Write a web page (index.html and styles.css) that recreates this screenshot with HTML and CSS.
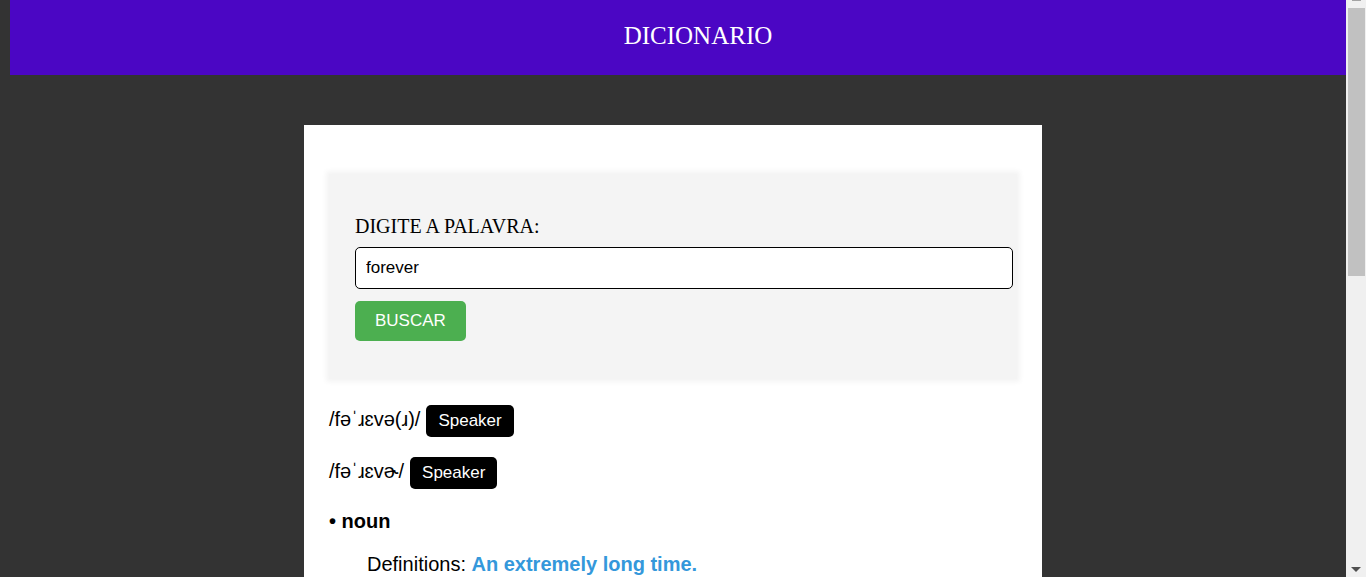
FILE: index.html
```html
<!DOCTYPE html>
<html lang="pt-BR">
<head>
<meta charset="utf-8">
<title>Dicionario</title>
<link rel="stylesheet" href="styles.css">
</head>
<body>
<div class="viewport">
  <div class="page">
    <header class="header"><h1 class="title">DICIONARIO</h1></header>
    <main class="card">
      <form class="search">
        <label class="label" for="word">DIGITE A PALAVRA:</label>
        <input class="field" id="word" type="text" value="forever">
        <button class="submit" type="button">BUSCAR</button>
      </form>
      <section class="result">
        <div class="phonetic"><span class="ipa">/fəˈɹɛvə(ɹ)/</span><button class="speaker" type="button">Speaker</button></div>
        <div class="phonetic"><span class="ipa">/fəˈɹɛvɚ/</span><button class="speaker" type="button">Speaker</button></div>
        <h2 class="class-name">• noun</h2>
        <p class="definition">Definitions: <strong class="meaning">An extremely long time.</strong></p>
      </section>
    </main>
  </div>
  <div class="scrollbar" aria-hidden="true">
    <span class="arrow-up"></span>
    <span class="track"><span class="thumb"></span></span>
    <svg class="arrow-down" width="10" height="5" viewBox="0 0 10 5"><path d="M0 0h10L5 5z" fill="#505050"/></svg>
  </div>
</div>
</body>
</html>
```
FILE: styles.css
```css
body {
  margin: 0;
  background: #333;
  color: #000;
  font: 20px/24px "Liberation Sans", Arial, sans-serif;
}
.viewport {
  display: flex;
  height: 100vh;
  overflow: hidden;
}
.page {
  flex: 1;
  min-width: 0;
  overflow: hidden;
}
.header {
  margin-left: 10px;
  padding: 20px 0 24px 40px;
  background: #4b06c4;
  color: #fff;
  text-align: center;
}
.title {
  margin: 0;
  font: 25px/31px "Liberation Serif", "Times New Roman", serif;
}
.card {
  box-sizing: border-box;
  width: 100%;
  max-width: 738px;
  margin: 50px auto 0;
  padding: 49px 25px 25px;
  background: #fff;
}
.search {
  padding: 40px 26px 38px;
  background: #f4f4f4;
  box-shadow: 0 0 5px 3px #f4f4f4;
}
.label {
  display: block;
  margin-bottom: 9px;
  font: 20px/24px "Liberation Serif", "Times New Roman", serif;
}
.field {
  display: block;
  width: 100%;
  height: 40px;
  padding: 0 10px;
  border: 1px solid #000;
  border-radius: 5px;
  background: #fff;
  color: #000;
  font: 17px "Liberation Sans", Arial, sans-serif;
}
.submit {
  display: block;
  height: 40px;
  margin-top: 12px;
  padding: 0 20px;
  border: 0;
  border-radius: 5px;
  background: #4caf50;
  color: #fff;
  font: 17px "Liberation Sans", Arial, sans-serif;
}
.result {
  padding-top: 26px;
}
.phonetic {
  display: flex;
  align-items: center;
  gap: 6px;
  margin-bottom: 20px;
}
.ipa {
  padding-bottom: 4px;
}
.speaker {
  height: 32px;
  padding: 0 12px;
  border: 0;
  border-radius: 5px;
  background: #000;
  color: #fff;
  font: 17px "Liberation Sans", Arial, sans-serif;
}
.class-name {
  margin: 0;
  font-size: 20px;
  line-height: 24px;
}
.definition {
  margin: 19px 0 0 38px;
}
.meaning {
  color: #3498db;
}
.scrollbar {
  display: flex;
  flex-direction: column;
  align-items: center;
  width: 20px;
  background: #f0f0f0;
}
.arrow-up {
  width: 9px;
  height: 1px;
  background: #a3a3a3;
}
.track {
  flex: 1;
  align-self: stretch;
  padding: 7px 1px 0 2px;
}
.thumb {
  display: block;
  height: 48%;
  background: #c1c1c1;
}
.arrow-down {
  margin-bottom: 5px;
}
```
